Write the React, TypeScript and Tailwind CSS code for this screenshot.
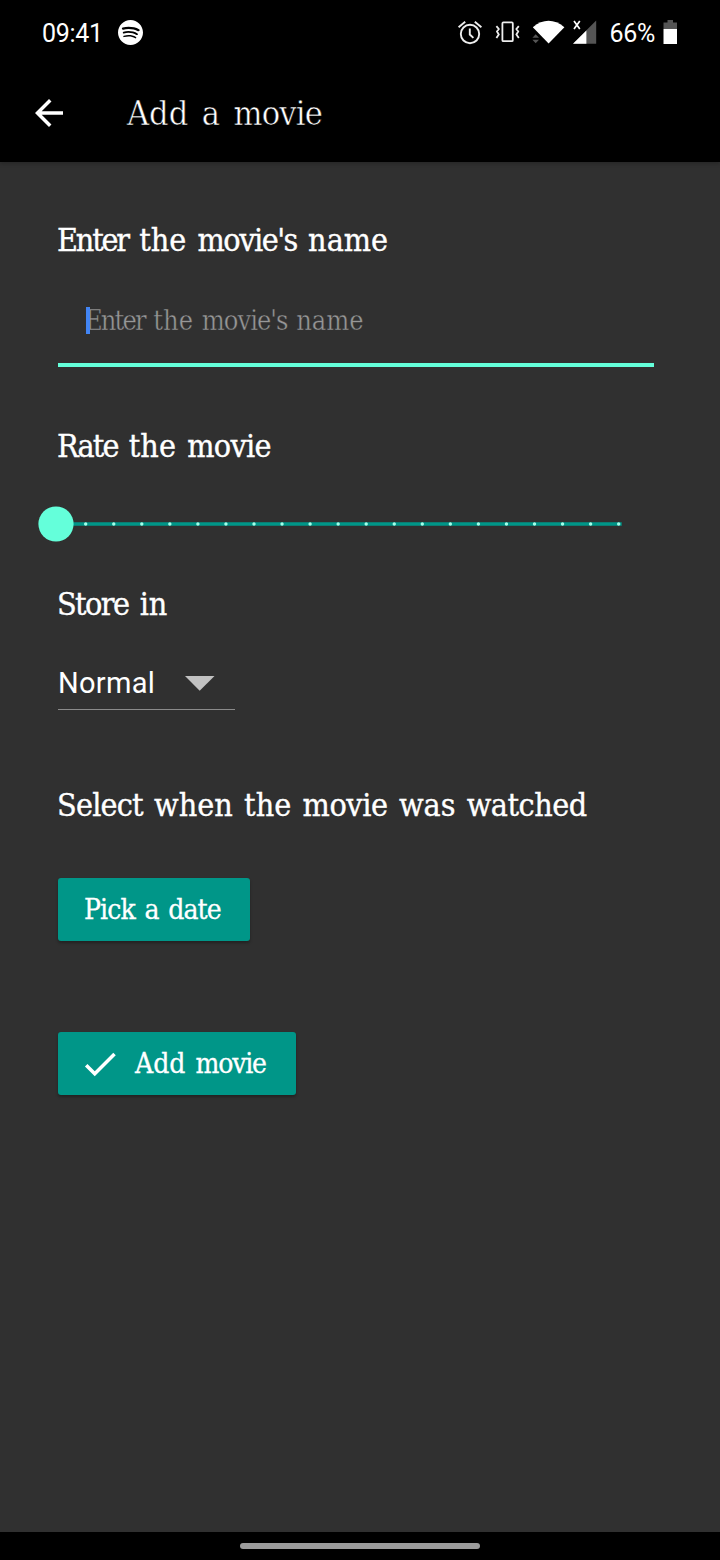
import type { ReactNode } from "react";
import { MdArrowBack, MdCheck } from "react-icons/md";
import { SiSpotify } from "react-icons/si";

const ticks = Array.from({ length: 20 }, (_, i) => 85.7 + i * 28.05);

function StatusBar() {
  return (
    <div className="flex h-[66px] items-center pr-[42px] pl-[42px] font-['Roboto',sans-serif] text-[25px] leading-none">
      <span className="tracking-[-0.3px]">09:41</span>
      <SiSpotify className="mb-0.5 ml-[15px] size-[25px]" />
      <div className="ml-auto flex items-center">
        <svg className="h-7 w-[26px]" viewBox="457 19 26 28" fill="none" stroke="#eee" strokeWidth="1.9">
          <circle cx="470" cy="34" r="9.2" />
          <path d="M469.8 28.5v6l3.6 3.4M458.6 27.2l6.6-5.4M481.4 27.2l-6.6-5.4" />
        </svg>
        <svg className="ml-[11px] h-7 w-[27px]" viewBox="494 19 27 28" fill="none" stroke="#eee" strokeWidth="1.8">
          <rect x="502.4" y="22.4" width="10.4" height="18.8" rx="1" />
          <path d="M496.4 26.2l2.4 2.8-1.8 2.6 1.8 2.8-2.4 3.6M518.8 26.2l-2.4 2.8 1.8 2.6-1.8 2.8 2.4 3.6" />
        </svg>
        <svg className="ml-[10px] h-7 w-[35px]" viewBox="531 19 35 28">
          <path d="M532.8 27.2Q548.5 14.5 564.4 27.2L548.6 43.6Z" fill="#fff" />
          <path d="M532.4 37.8l3.3-3.6 3.3 3.6ZM532.4 39.7h6.6l-3.3 3.6Z" fill="#555" />
        </svg>
        <svg className="ml-[5px] h-7 w-[27px]" viewBox="571 19 27 28">
          <path d="M573 43.8L596.2 20.5V43.8Z" fill="#555" />
          <path d="M573 43.8L586.4 30.4V43.8Z" fill="#fff" />
          <path d="M574 21l5.8 8M579.8 21l-5.8 8" stroke="#fff" strokeWidth="1.7" />
        </svg>
        <span className="ml-[11px] tracking-[-0.3px]">66%</span>
        <svg className="ml-[8px] h-7 w-[15px]" viewBox="663 19 15 28">
          <path d="M663.5 22.6h4V20h5.5v2.6h4V29h-13.5Z" fill="#555" />
          <path d="M663.5 29H677v15h-13.5Z" fill="#fff" />
        </svg>
      </div>
    </div>
  );
}

function Label({ children }: { children: ReactNode }) {
  return (
    <h2 className="h-12 text-[32px] leading-[48px] whitespace-nowrap [word-spacing:2.1px] [-webkit-text-stroke:0.35px_#fff]">
      {children}
    </h2>
  );
}

export default function App() {
  return (
    <div className="flex h-[1560px] w-[720px] flex-col bg-[#303030] font-['DejaVu_Serif_Condensed','DejaVu_Serif',serif] text-white">
      <header className="h-[162px] shrink-0 bg-black shadow-[0_2px_4px_rgba(0,0,0,0.2)]">
        <StatusBar />
        <div className="flex h-[94px] items-center pl-7">
          <MdArrowBack className="size-[42px]" />
          <h1 className="ml-[57px] text-[34px] leading-[48px] whitespace-nowrap [word-spacing:3.8px] [-webkit-text-stroke:0.5px_#000]">
            Add a <span className="tracking-[-0.8px]">movie</span>
          </h1>
        </div>
      </header>

      <main className="flex grow flex-col items-start px-[57px] pt-[54px]">
        <Label>
          <span className="tracking-[-2.2px]">Enter</span> the <span className="tracking-[-1.5px]">movie's</span> name
        </Label>
        <div className="mt-[26px] ml-px flex h-[77px] w-[596px] items-start border-b-[4px] border-[#64ffda] pt-[13px] pl-7">
          <div className="relative flex h-9 items-center text-[27px] leading-9 whitespace-nowrap text-[#979797] [word-spacing:1px] [-webkit-text-stroke:0.4px_#303030]">
            <span className="-ml-px">
              <span className="tracking-[-1.9px]">Enter</span> the <span className="tracking-[-1px]">movie's</span> name
            </span>
            <div className="absolute top-[4px] left-0 h-[27px] w-[4px] bg-[#4285f4]" />
          </div>
        </div>

        <div className="mt-[55px]">
          <Label>
            <span className="tracking-[-1.9px]">Rate</span> the <span className="tracking-[-0.7px]">movie</span>
          </Label>
        </div>
        <svg className="mt-[34px] -ml-5 h-10 w-[590px]" viewBox="37 504 590 40">
          <path d="M56 524H621.7" stroke="#009688" strokeWidth="3.6" />
          {ticks.map((x) => (
            <circle key={x} cx={x} cy="524" r="1.7" fill="#a4ffe9" />
          ))}
          <circle cx="56" cy="524" r="17.6" fill="#64ffda" />
        </svg>

        <div className="mt-[36px]">
          <Label>
            <span className="tracking-[-1.6px]">Store</span> in
          </Label>
        </div>
        <div className="mt-[27px] ml-px flex h-[55px] w-[177px] items-center border-b border-[#8a8a8a] pt-[2px] font-['Roboto',sans-serif] text-[29px] leading-none">
          <span className="w-[127px] tracking-[0.3px]">Normal</span>
          <svg className="h-[15px] w-[30px]" viewBox="0 0 30 15">
            <path d="M0 0H29.5L14.7 14.7Z" fill="#c1c1c1" />
          </svg>
        </div>

        <div className="mt-[71px]">
          <Label>
            <span className="tracking-[-0.8px]">Select</span> when the <span className="tracking-[-0.4px]">movie</span> was{" "}
            <span className="tracking-[-0.5px]">watched</span>
          </Label>
        </div>
        <button className="mt-[49px] ml-px flex h-[63px] w-[192px] items-center rounded-[3px] bg-[#009688] pt-px pl-[26px] text-[28px] whitespace-nowrap shadow-[0_2px_3px_rgba(0,0,0,0.3)] [word-spacing:2.6px] [-webkit-text-stroke:0.3px_#fff]">
          <span className="tracking-[-0.9px]">Pick a date</span>
        </button>
        <button className="mt-[91px] ml-px flex h-[63px] w-[238px] items-center rounded-[3px] bg-[#009688] pt-px pl-[21px] text-[28px] whitespace-nowrap shadow-[0_2px_3px_rgba(0,0,0,0.3)] [word-spacing:2.1px] [-webkit-text-stroke:0.3px_#fff]">
          <MdCheck className="size-[42px]" />
          <span className="ml-[14px]">
            Add <span className="tracking-[-1.2px]">movie</span>
          </span>
        </button>
      </main>

      <footer className="flex h-7 shrink-0 items-center justify-center bg-black">
        <div className="h-1.5 w-60 rounded-full bg-[#9b9b9b]" />
      </footer>
    </div>
  );
}
